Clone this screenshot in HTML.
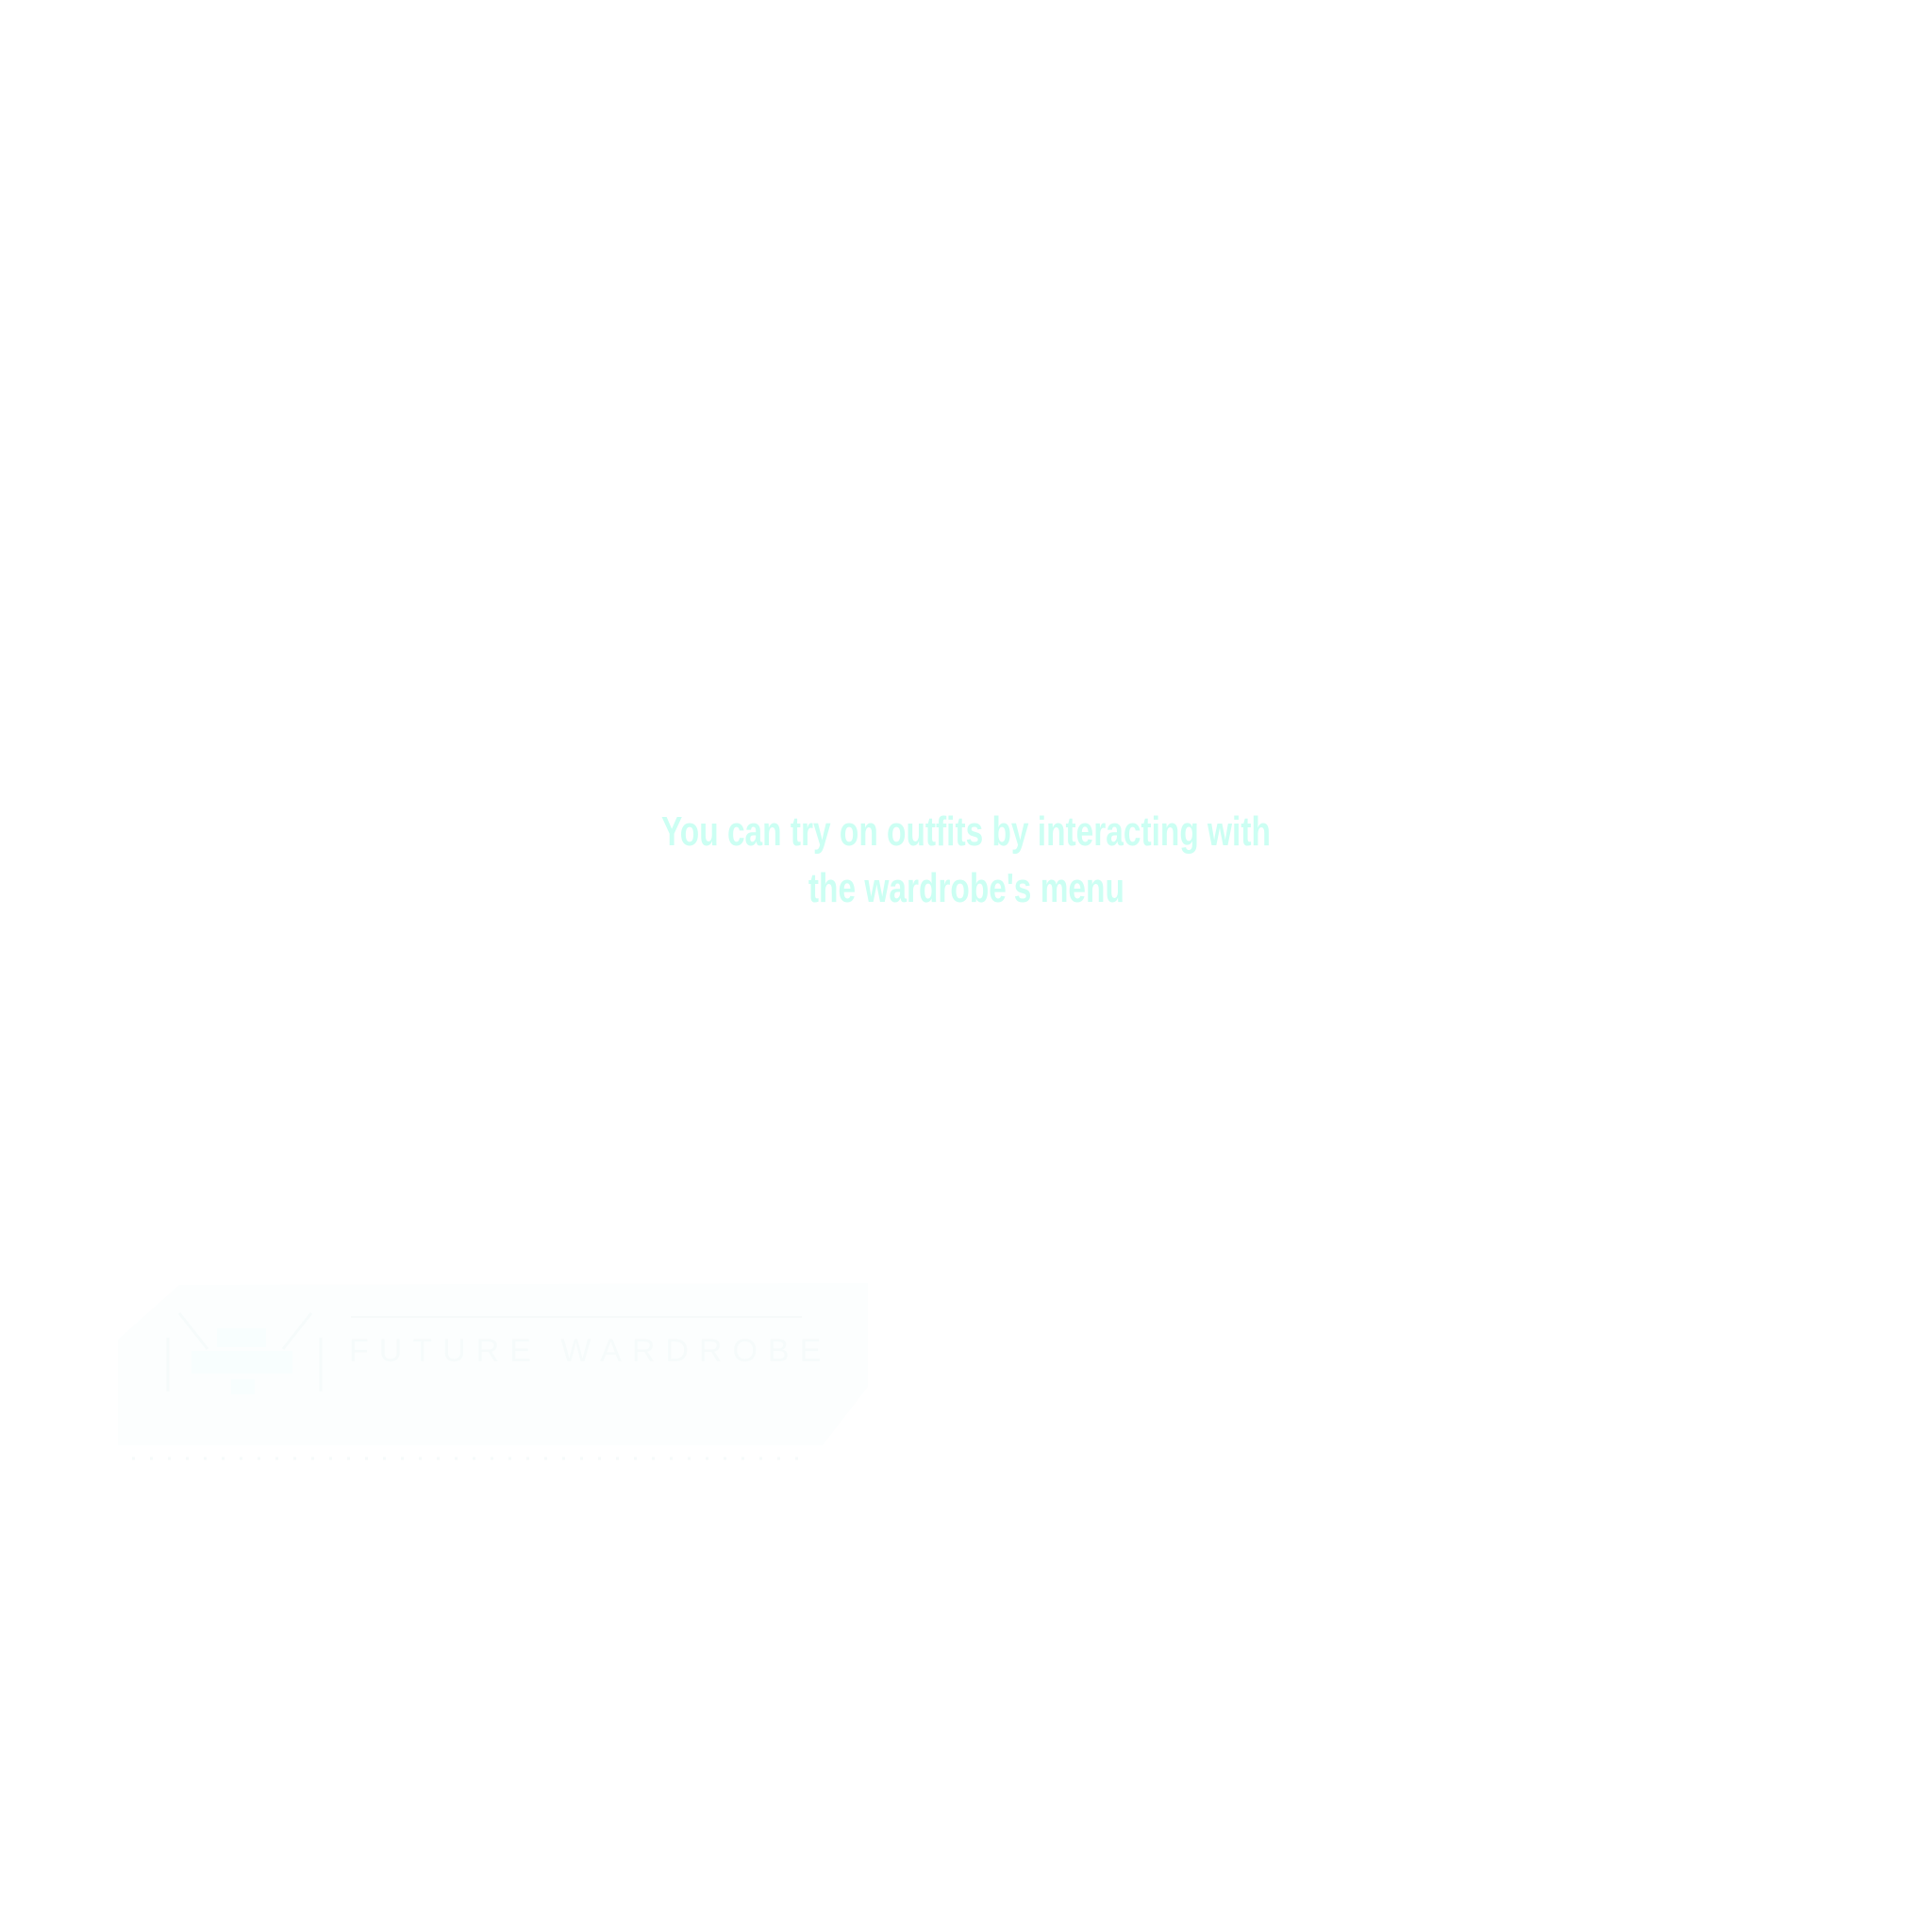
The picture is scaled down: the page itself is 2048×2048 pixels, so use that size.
<!DOCTYPE html>
<html><head><meta charset="utf-8"><style>
html,body{margin:0;padding:0;background:#fff;width:2048px;height:2048px;overflow:hidden}
.msg{position:absolute;left:0;width:2048px;top:852px;text-align:center;font-family:"Liberation Sans",sans-serif;font-weight:bold;font-size:44px;line-height:60px;color:#ccfff3;}
.msg span{display:inline-block;transform:scaleX(0.76);transform-origin:center;white-space:nowrap}
</style></head><body>
<div class="msg"><span>You can try on outfits by interacting with</span><br><span>the wardrobe's menu</span></div>
<svg width="2048" height="2048" style="position:absolute;left:0;top:0">
<path d="M190 1362 L920 1360 L920 1470 L872 1532 L125 1532 L125 1420 Z" fill="#fcfefe"/>
<rect x="230" y="1408" width="52" height="20" fill="#f8fefe"/>
<rect x="203" y="1432" width="107" height="24" fill="#f8fefe"/>
<rect x="245" y="1462" width="25" height="16" fill="#f8fefe"/>
<path d="M190 1392 L220 1430 M330 1392 L300 1430 M178 1418 L178 1475 M340 1418 L340 1475" stroke="#f6fbfb" stroke-width="3" fill="none"/>
<line x1="372" y1="1396" x2="850" y2="1396" stroke="#f6fafa" stroke-width="2"/>
<text x="370" y="1443" font-family="Liberation Sans" font-size="34" letter-spacing="11" fill="#f6fbfb">FUTURE WARDROBE</text>
<line x1="140" y1="1546" x2="850" y2="1546" stroke="#f6fafa" stroke-width="3" stroke-dasharray="3 16"/>
</svg>
</body></html>
